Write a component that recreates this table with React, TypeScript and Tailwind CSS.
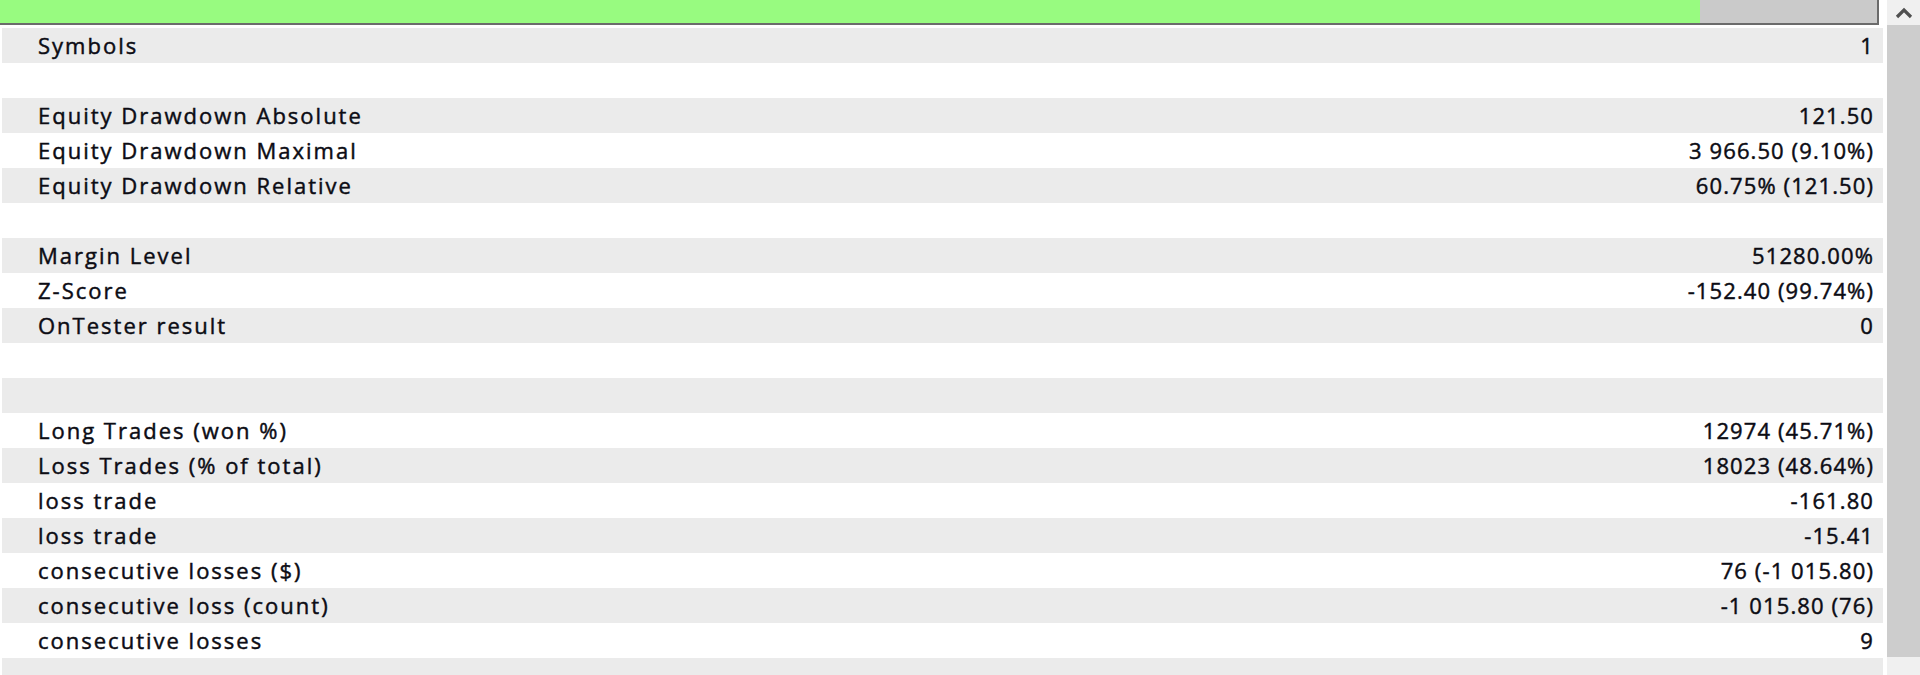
import React from "react";

type Row = { label: string; value: string } | null;

const rows: Row[] = [
  { label: "Symbols", value: "1" },
  null,
  { label: "Equity Drawdown Absolute", value: "121.50" },
  { label: "Equity Drawdown Maximal", value: "3 966.50 (9.10%)" },
  { label: "Equity Drawdown Relative", value: "60.75% (121.50)" },
  null,
  { label: "Margin Level", value: "51280.00%" },
  { label: "Z-Score", value: "-152.40 (99.74%)" },
  { label: "OnTester result", value: "0" },
  null,
  null,
  { label: "Long Trades (won %)", value: "12974 (45.71%)" },
  { label: "Loss Trades (% of total)", value: "18023 (48.64%)" },
  { label: "loss trade", value: "-161.80" },
  { label: "loss trade", value: "-15.41" },
  { label: "consecutive losses ($)", value: "76 (-1 015.80)" },
  { label: "consecutive loss (count)", value: "-1 015.80 (76)" },
  { label: "consecutive losses", value: "9" },
  null,
];

export default function App() {
  return (
    <div
      className="w-[1920px] h-[675px] bg-white flex overflow-hidden text-[#0c0c14] text-[22px] [-webkit-text-stroke:0.45px_#0c0c14]"
      style={{ fontFamily: '"Open Sans", "Noto Sans", sans-serif' }}
    >
      <div className="flex-1 flex flex-col overflow-hidden">
        <div className="h-[25px] shrink-0 mr-[8px] flex border-b-2 border-r-2 border-[#6b6b6b]">
          <div className="w-[1700px] bg-[#98fb80]" />
          <div className="flex-1 bg-[#cacaca]" />
        </div>
        <div className="h-[3px] shrink-0" />
        <div className="flex flex-col shrink-0 pl-[2px] pr-[4px]">
          {rows.map((r, i) => (
            <div
              key={i}
              className={`h-[35px] shrink-0 flex items-center justify-between pl-[36px] pr-[9px] pb-[2px] ${
                i % 2 === 0 ? "bg-[#ebebeb]" : "bg-white"
              }`}
            >
              <span className="leading-none tracking-[2px]">{r ? r.label : ""}</span>
              <span className="leading-none tracking-[1.1px]">{r ? r.value : ""}</span>
            </div>
          ))}
        </div>
      </div>
      <div className="w-[33px] shrink-0 bg-[#f0f0f0] flex flex-col">
        <div className="h-[25px] shrink-0 flex items-center justify-center">
          <svg width="20" height="12" viewBox="0 0 20 12">
            <path d="M3 10 L10 3 L17 10" fill="none" stroke="#505050" strokeWidth="3.2" />
          </svg>
        </div>
        <div className="h-[632px] shrink-0 bg-[#cdcdcd]" />
        <div className="flex-1" />
      </div>
    </div>
  );
}
